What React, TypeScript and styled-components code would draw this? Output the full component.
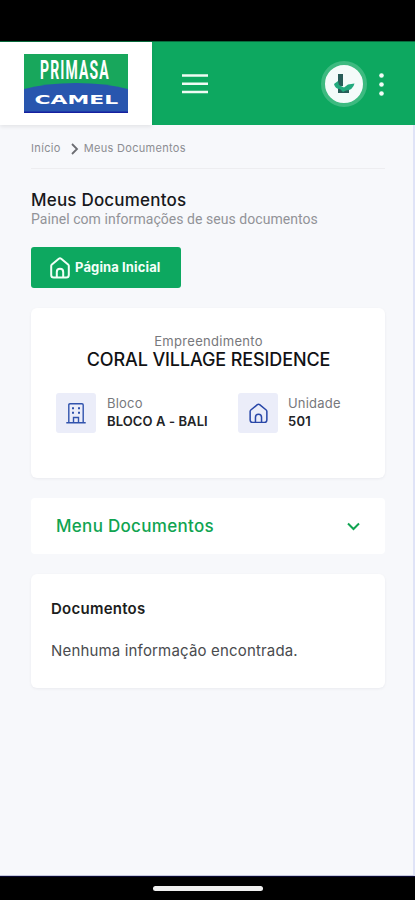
import React from "react";
import styled, { createGlobalStyle } from "styled-components";

const GlobalStyle = createGlobalStyle`
  * { box-sizing: border-box; }
  body { margin: 0; background: #000; }
  h1, h2, p { margin: 0; }
  svg { display: block; flex: none; }
`;

const Screen = styled.div`
  display: flex;
  flex-direction: column;
  width: 415px;
  height: 900px;
  overflow: hidden;
  background: #000;
  font-family: Inter, sans-serif;
`;

const StatusBar = styled.div`
  flex: none;
  height: 41px;
`;

const Header = styled.header`
  display: flex;
  flex: none;
  height: 84px;
  background: #0da860;
  border-top: 1px solid #076a3c;
  z-index: 1;
`;

const Brand = styled.div`
  display: flex;
  width: 152px;
  padding: 12px 0 0 24px;
  background: #fff;
  box-shadow: 0 2px 4px rgba(0, 0, 0, 0.08);
`;

const Toolbar = styled.div`
  display: flex;
  flex: 1;
  align-items: center;
  padding: 0 31px 0 30px;
`;

const IconButton = styled.button`
  display: flex;
  padding: 0;
  border: 0;
  background: none;
`;

const Avatar = styled.div`
  display: flex;
  align-items: center;
  justify-content: center;
  width: 46px;
  height: 46px;
  margin: 0 12px 0 auto;
  border: 4px solid #3dba80;
  border-radius: 50%;
  background: #f4fbfa;
`;

const Content = styled.main`
  flex: 1;
  padding: 0 28px 0 31px;
  background: #f7f8fb;
  border-right: 2px solid #dfe3f7;
  border-bottom: 1px solid #c5c8dd;
`;

const Breadcrumb = styled.nav`
  display: flex;
  align-items: center;
  height: 44px;
  margin-bottom: 20px;
  padding-top: 2px;
  border-bottom: 1px solid #ededf0;
`;

const Text = styled.span<{ $size: number; $color: string; $weight?: number; $spacing?: number; $line?: number }>`
  display: block;
  white-space: nowrap;
  font-size: ${(p) => p.$size}px;
  line-height: ${(p) => p.$line ?? 18}px;
  font-weight: ${(p) => p.$weight ?? 400};
  letter-spacing: ${(p) => p.$spacing ?? 0}px;
  color: ${(p) => p.$color};
`;

const CrumbIcon = styled.span`
  margin: 2px 4px 0 8px;
`;

const Subtitle = styled(Text)`
  font-family: Roboto, sans-serif;
`;

const HomeButton = styled.button`
  display: flex;
  align-items: center;
  gap: 5px;
  width: 150px;
  height: 41px;
  margin-top: 19px;
  padding: 0 0 0 19px;
  border: 0;
  border-radius: 3px;
  background: #0da860;
  font-family: inherit;
`;

const ButtonLabel = styled(Text)`
  padding-bottom: 2px;
`;

const Card = styled.section<{ $height: number; $top: number; $pad: string }>`
  width: 354px;
  height: ${(p) => p.$height}px;
  margin-top: ${(p) => p.$top}px;
  padding: ${(p) => p.$pad};
  border-radius: 6px;
  background: #fff;
  box-shadow: 0 1px 3px rgba(20, 25, 50, 0.06);
`;

const Project = styled.div`
  display: flex;
  flex-direction: column;
  align-items: center;
`;

const Facts = styled.div`
  display: grid;
  grid-template-columns: 182px 1fr;
  margin-top: 23px;
`;

const Fact = styled.div<{ $gap: number }>`
  display: flex;
  gap: ${(p) => p.$gap}px;
`;

const Tile = styled.div`
  display: flex;
  align-items: center;
  justify-content: center;
  width: 40px;
  height: 40px;
  border-radius: 3px;
  background: #ebedf9;
`;

const Menu = styled(Card)`
  display: flex;
  align-items: center;
  justify-content: space-between;
  border-radius: 4px;
  box-shadow: none;
`;

const HomeBar = styled.footer`
  display: flex;
  flex: none;
  justify-content: center;
  height: 24px;
  padding-top: 9px;
  border-top: 1px solid #080830;
`;

const Handle = styled.div`
  width: 110px;
  height: 5px;
  border-radius: 3px;
  background: #f0f0f0;
`;

const Logo = () => (
  <svg width="104" height="59" viewBox="0 0 104 59">
    <rect width="104" height="59" fill="#18a75c" />
    <path d="M0 35 Q22 29 52 29 Q82 29 104 35 V59 H0Z" fill="#2856ae" />
    <rect y="57.5" width="104" height="1.5" fill="#1620a0" />
    <text transform="translate(16 25) scale(.56 1)" fill="#fff" fontFamily="Roboto" fontWeight="700" fontSize="25" letterSpacing="2">PRIMASA</text>
    <text transform="translate(10.5 50) scale(1.78 1)" fill="#fff" fontFamily="DejaVu Sans" fontWeight="700" fontSize="12.3">CAMEL</text>
  </svg>
);

const House = ({ size, color, stroke }: { size: number; color: string; stroke: number }) => (
  <svg width={size} height={size * 1.1} viewBox="0 0 20 22" fill="none" stroke={color} strokeWidth={stroke} strokeLinejoin="round" strokeLinecap="round">
    <path d="M1.2 8.8Q1.2 8 1.9 7.4L8.8 1.7Q10 .8 11.2 1.7L18.1 7.4Q18.8 8 18.8 8.8V18Q18.8 20.6 16.2 20.6H3.8Q1.2 20.6 1.2 18Z" />
    <path d="M6.8 20V15Q6.8 11.8 10 11.8Q13.2 11.8 13.2 15V20" />
  </svg>
);

const Building = () => (
  <svg width="20" height="21" viewBox="0 0 20 21" fill="none" stroke="#3153ad" strokeWidth="1.4">
    <path d="M.3 19.7H19.7M2.8 19V2Q2.8.8 4 .8H16Q17.2.8 17.2 2V19" />
    <path d="M7.5 19V14.5H12.5V19" />
    <path d="M6 5.2H8M12 5.2H14M6 9.7H8M12 9.7H14" strokeWidth="2" />
  </svg>
);

export default function App() {
  return (
    <Screen>
      <GlobalStyle />
      <StatusBar />
      <Header>
        <Brand><Logo /></Brand>
        <Toolbar>
          <IconButton aria-label="Menu">
            <svg width="26" height="20" viewBox="0 0 26 20" stroke="#effbf4" strokeWidth="2.4">
              <path d="M0 1.5H26M0 9.8H26M0 18H26" />
            </svg>
          </IconButton>
          <Avatar>
            <svg width="22" height="22" viewBox="0 0 22 22">
              <path d="M5 1H10V13H5ZM5 15H16V20H5Z" fill="#285d59" />
              <path d="M1 11L5 8L6 12L11 14.5L15 11.5L21.5 10.5Q20 17 13 17.5L10 19L7 16Q2 16 1 11Z" fill="#22aa7e" />
            </svg>
          </Avatar>
          <IconButton aria-label="Mais">
            <svg width="5" height="24" viewBox="0 0 5 24" fill="#f2fcf6">
              <circle cx="2.5" cy="3.5" r="2.3" /><circle cx="2.5" cy="12.5" r="2.3" /><circle cx="2.5" cy="21.5" r="2.3" />
            </svg>
          </IconButton>
        </Toolbar>
      </Header>
      <Content>
        <Breadcrumb>
          <Text $size={11} $color="#8c8d92" $spacing={0.35}>Início</Text>
          <CrumbIcon>
            <svg width="11" height="12" viewBox="0 0 11 12" fill="none" stroke="#6c6d72" strokeWidth="1.8"><path d="M3 1L8 6L3 11" /></svg>
          </CrumbIcon>
          <Text $size={11} $color="#8c8d92" $spacing={0.3}>Meus Documentos</Text>
        </Breadcrumb>
        <Text as="h1" $size={17} $line={22} $weight={500} $spacing={0.2} $color="#18191c">Meus Documentos</Text>
        <Subtitle as="p" $size={14} $line={17} $color="#929398" $spacing={0.05}>Painel com informações de seus documentos</Subtitle>
        <HomeButton>
          <House size={20} color="#f0fff6" stroke={2} />
          <ButtonLabel $size={13} $weight={700} $spacing={0.12} $color="#f4fff8">Página Inicial</ButtonLabel>
        </HomeButton>
        <Card $height={170} $top={20} $pad="24px 24px 0 25px">
          <Project>
            <Text $size={13} $spacing={0.3} $color="#77787c">Empreendimento</Text>
            <Text as="h2" $size={18} $line={20} $weight={500} $spacing={-0.12} $color="#111214">CORAL VILLAGE RESIDENCE</Text>
          </Project>
          <Facts>
            <Fact $gap={11}>
              <Tile><Building /></Tile>
              <div>
                <Text $size={13} $line={21} $spacing={0.2} $color="#77787c">Bloco</Text>
                <Text $size={13} $line={15} $weight={600} $spacing={0.1} $color="#222326">BLOCO A - BALI</Text>
              </div>
            </Fact>
            <Fact $gap={10}>
              <Tile><House size={19} color="#2947a8" stroke={1.6} /></Tile>
              <div>
                <Text $size={13} $line={21} $spacing={0.2} $color="#77787c">Unidade</Text>
                <Text $size={13} $line={15} $weight={600} $spacing={0.2} $color="#222326">501</Text>
              </div>
            </Fact>
          </Facts>
        </Card>
        <Menu $height={56} $top={20} $pad="0 25px 0 25px">
          <Text $size={17} $line={22} $weight={500} $spacing={0.3} $color="#10a451">Menu Documentos</Text>
          <svg width="13" height="9" viewBox="0 0 13 9" fill="none" stroke="#10a451" strokeWidth="2"><path d="M1 1.5L6.5 7L12 1.5" /></svg>
        </Menu>
        <Card $height={114} $top={20} $pad="25px 20px 0">
          <Text as="h2" $size={15} $line={20} $weight={600} $spacing={0.25} $color="#1c1d20">Documentos</Text>
          <Text as="p" $size={15} $line={64} $spacing={0.17} $color="#4a4b4e">Nenhuma informação encontrada.</Text>
        </Card>
      </Content>
      <HomeBar><Handle /></HomeBar>
    </Screen>
  );
}
